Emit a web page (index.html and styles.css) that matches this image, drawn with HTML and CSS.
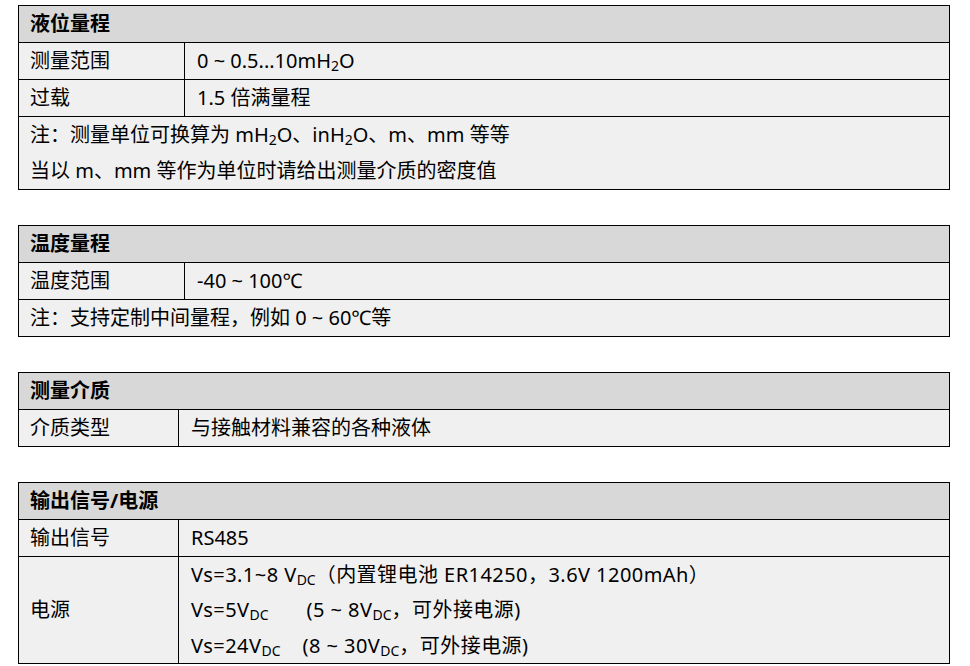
FILE: index.html
```html
<!DOCTYPE html>
<html lang="zh-CN">
<head>
<meta charset="utf-8">
<title>参数</title>
<link rel="stylesheet" href="styles.css">
</head>
<body>
<div class="page">
  <table class="spec spec-wide">
    <colgroup><col class="c1"><col></colgroup>
    <tr><th colspan="2">液位量程</th></tr>
    <tr><td>测量范围</td><td>0 ~ 0.5...10mH<sub>2</sub>O</td></tr>
    <tr><td>过载</td><td>1.5 倍满量程</td></tr>
    <tr><td colspan="2">注：测量单位可换算为 mH<sub>2</sub>O、inH<sub>2</sub>O、m、mm 等等<br>当以 m、mm 等作为单位时请给出测量介质的密度值</td></tr>
  </table>

  <table class="spec spec-wide">
    <colgroup><col class="c1"><col></colgroup>
    <tr><th colspan="2">温度量程</th></tr>
    <tr><td>温度范围</td><td>-40 ~ 100℃</td></tr>
    <tr><td colspan="2">注：支持定制中间量程，例如 0 ~ 60℃等</td></tr>
  </table>

  <table class="spec spec-narrow">
    <colgroup><col class="c1"><col></colgroup>
    <tr><th colspan="2">测量介质</th></tr>
    <tr><td>介质类型</td><td>与接触材料兼容的各种液体</td></tr>
  </table>

  <table class="spec spec-narrow">
    <colgroup><col class="c1"><col></colgroup>
    <tr><th colspan="2">输出信号/电源</th></tr>
    <tr><td>输出信号</td><td>RS485</td></tr>
    <tr><td>电源</td><td class="power">Vs=3.1~8 V<sub>DC</sub>（内置锂电池 ER14250，3.6V 1200mAh）<br>Vs=5V<sub>DC</sub><span class="gap-l"></span>(5 ~ 8V<sub>DC</sub>，可外接电源)<br>Vs=24V<sub>DC</sub><span class="gap-s"></span>(8 ~ 30V<sub>DC</sub>，可外接电源)</td></tr>
  </table>
</div>
</body>
</html>
```

FILE: styles.css
```css
html, body {
  margin: 0;
  padding: 0;
  background: #ffffff;
}

.page {
  padding: 5px 20px 0 18px;
  display: flex;
  flex-direction: column;
  gap: 35px;
  font-family: "Noto Sans", "Noto Sans CJK SC", sans-serif;
  font-size: 20px;
  color: #000000;
}

.spec {
  width: 932px;
  border-collapse: collapse;
  table-layout: fixed;
  border: 1px solid #000;
}

.spec-wide .c1 { width: 166px; }
.spec-narrow .c1 { width: 160px; }

.spec th,
.spec td {
  border: 1px solid #000;
  padding: 0 11px;
  line-height: 36px;
  text-align: left;
  vertical-align: middle;
  white-space: nowrap;
}

.spec th {
  background: #d8d8d8;
  font-weight: 700;
}

.spec td {
  background: #f0f0f0;
  font-weight: 400;
}

.spec td + td {
  padding-left: 12px;
}

.spec td.power {
  line-height: 35.3px;
  letter-spacing: 0.45px;
}

sub {
  font-size: 14px;
  line-height: 0;
  vertical-align: -3px;
  letter-spacing: 0;
}

.gap-l {
  display: inline-block;
  width: 38px;
}

.gap-s {
  display: inline-block;
  width: 22px;
}
```
